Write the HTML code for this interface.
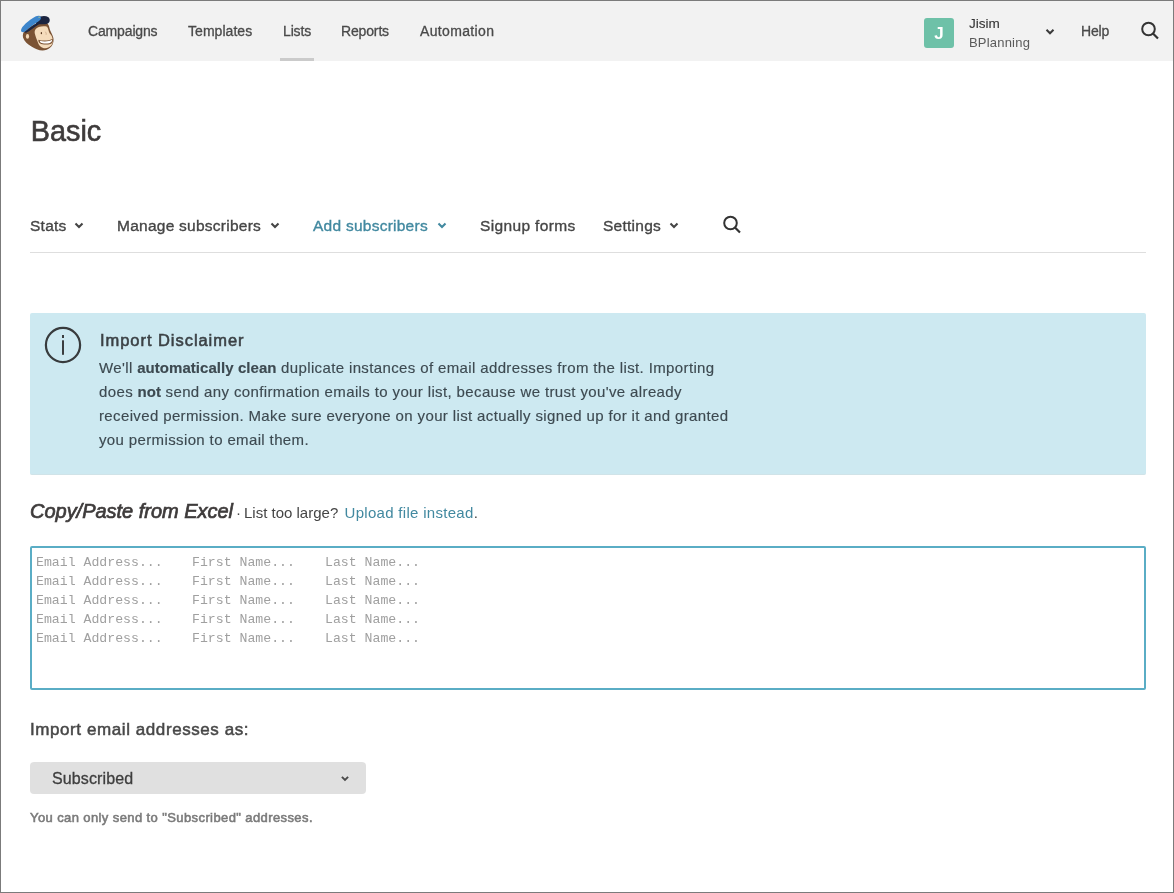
<!DOCTYPE html>
<html><head><meta charset="utf-8">
<style>
html,body{margin:0;padding:0;}
body{width:1174px;height:893px;overflow:hidden;background:#fff;position:relative;font-family:"Liberation Sans",sans-serif;}
.frame{position:absolute;left:0;top:0;width:1172px;height:891px;border:1px solid #7b7b7b;}
.hdr{position:absolute;left:1px;top:1px;width:1172px;height:60px;background:#f2f2f2;}
.t{position:absolute;white-space:pre;line-height:1;}
.nav{font-size:14px;letter-spacing:-0.15px;color:#4a4a4a;top:24px;-webkit-text-stroke:0.3px #4a4a4a;}
.sub{font-size:15.5px;letter-spacing:0.25px;color:#454545;top:217.5px;-webkit-text-stroke:0.35px currentColor;}
.ab{position:absolute;}
b{letter-spacing:0.05px;}
</style></head><body>
<div id="w" style="position:absolute;left:0;top:0;width:1174px;height:893px;will-change:transform;background:#fff">
<div class="frame"></div>
<div class="hdr"></div>
<!-- logo -->
<svg class="ab" style="left:18px;top:12px" width="40" height="40" viewBox="0 0 893 893">
  <path d="M150 420 C250 330 420 240 560 225 C640 225 690 270 705 370 C715 430 770 500 790 580 C805 680 770 790 640 845 C520 880 400 840 300 770 C220 720 140 660 112 570 C100 510 115 460 150 420 Z" fill="#7b5334"/>
  <ellipse cx="212" cy="545" rx="36" ry="52" fill="#f3d9b8"/>
  <path d="M392 385 C430 330 560 305 650 330 C685 380 680 440 710 480 C755 520 775 580 778 650 C775 740 710 800 610 810 C520 810 470 750 445 680 C420 610 395 560 375 480 C368 440 372 410 392 385 Z" fill="#f5dcbc"/>
  <ellipse cx="522" cy="472" rx="15" ry="26" fill="#5a3a22"/>
  <path d="M610 440 C630 470 640 500 620 510" fill="none" stroke="#b89373" stroke-width="12"/>
  <path d="M455 618 C560 650 700 640 775 595 C790 650 775 700 725 715 C640 735 540 728 495 705 C465 685 452 650 455 618 Z" fill="#7b5334"/>
  <path d="M485 642 C580 668 700 658 760 622 C762 660 738 688 700 695 C615 708 545 702 510 685 C495 672 486 658 485 642 Z" fill="#ffffff"/>
  <path d="M420 140 C500 85 610 75 680 115 C725 160 715 225 665 255 C585 285 470 275 400 262 Z" fill="#1c2540"/>
  <path d="M68 402 C78 330 220 195 400 95 C455 70 505 82 512 120 C520 162 470 202 420 232 C300 312 200 402 152 442 C108 465 62 448 68 402 Z" fill="#3d86cc"/>
  <path d="M145 446 C232 380 340 292 450 222 C490 197 522 172 542 150 C560 190 532 232 482 262 C372 332 262 420 192 460 C168 470 150 462 145 446 Z" fill="#1c2540"/>
  <circle cx="472" cy="118" r="17" fill="#a8c08e"/>
</svg>
<div class="t nav" style="left:88px">Campaigns</div>
<div class="t nav" style="left:188px;letter-spacing:0.05px">Templates</div>
<div class="t nav" style="left:283px">Lists</div>
<div class="ab" style="left:280px;top:58px;width:34px;height:3px;background:#cbcbcb"></div>
<div class="t nav" style="left:341px">Reports</div>
<div class="t nav" style="left:420px;letter-spacing:0.35px">Automation</div>
<div class="ab" style="left:924px;top:18px;width:30px;height:30px;border-radius:3px;background:#6ec1a8;color:#fff;font-weight:bold;font-size:17px;line-height:31px;text-align:center;font-family:'Liberation Sans',sans-serif">J</div>
<div class="t" style="left:969px;top:16.5px;font-size:13.5px;color:#333;-webkit-text-stroke:0.1px #333">Jisim</div>
<div class="t" style="left:969px;top:36px;font-size:13px;color:#5a5a5a;letter-spacing:0.2px">BPlanning</div>
<svg class="ab" style="left:1044px;top:27px" width="12" height="10" viewBox="0 0 12 10"><path d="M2.5 2.8 L6 6.3 L9.5 2.8" fill="none" stroke="#3b3b3b" stroke-width="2"/></svg>
<div class="t nav" style="left:1081px">Help</div>
<svg class="ab" style="left:1138px;top:19px" width="24" height="24" viewBox="0 0 24 24"><circle cx="10.5" cy="10" r="6.3" fill="none" stroke="#333" stroke-width="2"/><path d="M15 14.5 L20 19.5" stroke="#333" stroke-width="2.2"/></svg>

<div class="t" style="left:30.8px;top:116.5px;font-size:28.8px;color:#3e3b3b;-webkit-text-stroke:0.6px #3e3b3b">Basic</div>

<div class="t sub" style="left:30px">Stats</div>
<svg class="ab" style="left:73px;top:220px" width="12" height="10" viewBox="0 0 12 10"><path d="M2.5 3.5 L6 7 L9.5 3.5" fill="none" stroke="#454545" stroke-width="2.1"/></svg>
<div class="t sub" style="left:117px">Manage subscribers</div>
<svg class="ab" style="left:269px;top:220px" width="12" height="10" viewBox="0 0 12 10"><path d="M2.5 3.5 L6 7 L9.5 3.5" fill="none" stroke="#454545" stroke-width="2.1"/></svg>
<div class="t sub" style="left:313px;color:#4289a0">Add subscribers</div>
<svg class="ab" style="left:436px;top:220px" width="12" height="10" viewBox="0 0 12 10"><path d="M2.5 3.5 L6 7 L9.5 3.5" fill="none" stroke="#4289a0" stroke-width="2.1"/></svg>
<div class="t sub" style="left:480px;letter-spacing:0.35px">Signup forms</div>
<div class="t sub" style="left:603px">Settings</div>
<svg class="ab" style="left:668px;top:220px" width="12" height="10" viewBox="0 0 12 10"><path d="M2.5 3.5 L6 7 L9.5 3.5" fill="none" stroke="#454545" stroke-width="2.1"/></svg>
<svg class="ab" style="left:720px;top:213px" width="24" height="24" viewBox="0 0 24 24"><circle cx="10.5" cy="10" r="6.3" fill="none" stroke="#333" stroke-width="2"/><path d="M15 14.5 L20 19.5" stroke="#333" stroke-width="2.2"/></svg>
<div class="ab" style="left:30px;top:252px;width:1116px;height:1px;background:#dedede"></div>

<!-- info box -->
<div class="ab" style="left:30px;top:313px;width:1116px;height:161px;background:#cde9f1;border-radius:2px;border-bottom:1px solid #d0e3e8"></div>
<svg class="ab" style="left:43px;top:325px" width="40" height="40" viewBox="0 0 40 40"><circle cx="20" cy="20" r="17.1" fill="none" stroke="#383b3d" stroke-width="2.2"/><rect x="19" y="10" width="2" height="3" fill="#3a3d3f"/><rect x="19" y="15.3" width="2" height="14.5" fill="#3a3d3f"/></svg>
<div class="t" style="left:100px;top:332.2px;font-size:16.5px;letter-spacing:0.95px;color:#3b4145;-webkit-text-stroke:0.55px #3b4145">Import Disclaimer</div>
<div class="ab" style="left:99px;top:356px;font-size:15px;line-height:24px;letter-spacing:0.37px;color:#3d4a51;white-space:pre;-webkit-text-stroke:0.15px #3d4a51">We'll <b>automatically clean</b> duplicate instances of email addresses from the list. Importing
does <b>not</b> send any confirmation emails to your list, because we trust you've already
received permission. Make sure everyone on your list actually signed up for it and granted
you permission to email them.</div>

<div class="t" style="left:30px;top:501px;font-size:20px;font-style:italic;letter-spacing:-0.02px;color:#3e3b3b;-webkit-text-stroke:0.7px #3e3b3b">Copy/Paste from Excel</div>
<div class="t" style="left:236px;top:505px;font-size:15px;color:#454545">·</div>
<div class="t" style="left:244px;top:505px;font-size:15px;color:#454545">List too large?</div>
<div class="t" style="left:344.5px;top:505px;font-size:15px;letter-spacing:0.3px;color:#4289a0">Upload file instead<span style="color:#454545">.</span></div>

<!-- textarea -->
<div class="ab" style="left:30px;top:546px;width:1112px;height:140px;border:2px solid #5aadc5;border-radius:2px"></div>
<div class="ab" style="left:36px;top:553px;font-family:'Liberation Mono',monospace;font-size:13.2px;line-height:19px;color:#a0a0a0;white-space:pre">Email Address...
Email Address...
Email Address...
Email Address...
Email Address...</div>
<div class="ab" style="left:192px;top:553px;font-family:'Liberation Mono',monospace;font-size:13.2px;line-height:19px;color:#a0a0a0;white-space:pre">First Name...
First Name...
First Name...
First Name...
First Name...</div>
<div class="ab" style="left:325px;top:553px;font-family:'Liberation Mono',monospace;font-size:13.2px;line-height:19px;color:#a0a0a0;white-space:pre">Last Name...
Last Name...
Last Name...
Last Name...
Last Name...</div>

<div class="t" style="left:30px;top:720.5px;font-size:17px;letter-spacing:0.58px;color:#474747;-webkit-text-stroke:0.5px #474747">Import email addresses as:</div>
<div class="ab" style="left:30px;top:762px;width:336px;height:32px;border-radius:4px;background:#e0e0e0"></div>
<div class="t" style="left:52px;top:771px;font-size:16px;letter-spacing:0.12px;color:#3e3e3e;-webkit-text-stroke:0.3px #3e3e3e">Subscribed</div>
<svg class="ab" style="left:339px;top:773px" width="12" height="10" viewBox="0 0 12 10"><path d="M2.9 3.9 L6 7 L9.1 3.9" fill="none" stroke="#4a4a4a" stroke-width="1.9"/></svg>
<div class="t" style="left:30px;top:810.6px;font-size:13px;letter-spacing:0.4px;color:#7a7a7a;-webkit-text-stroke:0.55px #7a7a7a">You can only send to "Subscribed" addresses.</div>
</div>
</body></html>
